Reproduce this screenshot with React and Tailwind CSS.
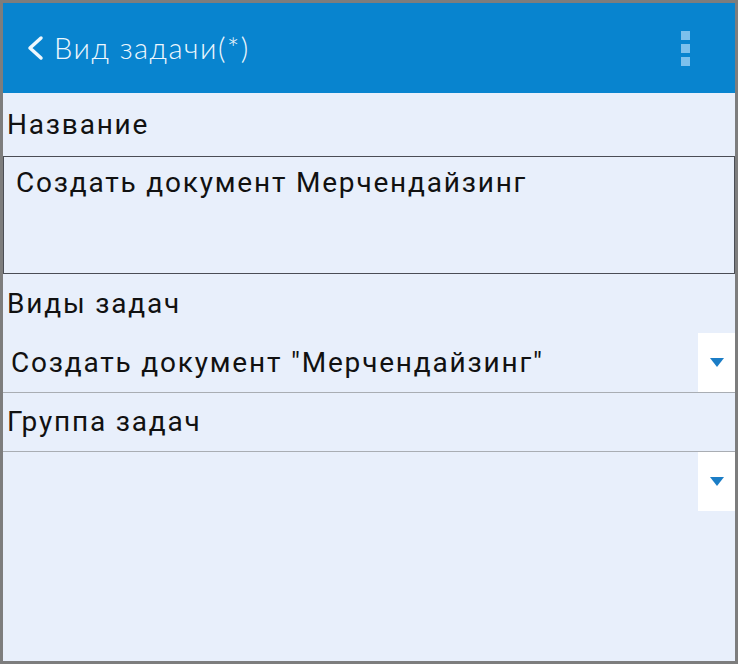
export default function App() {
  const font = { fontFamily: 'Roboto, "Noto Sans", sans-serif' };
  const Tri = () => (
    <svg width="14" height="10" viewBox="0 0 14 10">
      <path d="M0 0 L14 0 L7 9 Z" fill="#1b7dc6" />
    </svg>
  );
  return (
    <div className="w-[738px] h-[664px] bg-[#7d7d7d] pt-[3px] pl-[3px] pr-[3px] pb-[3px]" style={font}>
      <div className="w-full h-full bg-[#e8effb] flex flex-col">
        <div className="h-[90px] bg-[#0884cf] flex items-center justify-between pl-[22px] pr-[45px] shrink-0">
          <div className="flex items-center gap-[9px]">
            <svg width="20" height="28" viewBox="0 0 20 28">
              <path d="M16 4 L5 14 L16 24" fill="none" stroke="#eef7fd" strokeWidth="3.5" strokeLinecap="round" strokeLinejoin="round" />
            </svg>
            <span className="text-[29px] text-[#eef7fd] font-light tracking-[1.5px]" style={{ fontFamily: '"Lato", "Open Sans", sans-serif' }}>Вид задачи(*)</span>
          </div>
          <div className="flex flex-col gap-[4px]">
            <div className="w-[9px] h-[9px] bg-[#7dc0ec]" />
            <div className="w-[9px] h-[9px] bg-[#7dc0ec]" />
            <div className="w-[9px] h-[9px] bg-[#7dc0ec]" />
          </div>
        </div>
        <div className="h-[63px] flex items-center pl-[4px] text-[28px] tracking-[1.8px] text-[#111] shrink-0">Название</div>
        <div className="h-[118px] border border-[#4a4d55] pl-[12px] pt-[9px] text-[28px] tracking-[1.8px] text-[#111] shrink-0 leading-[34px]">Создать документ Мерчендайзинг</div>
        <div className="h-[59px] flex items-center pl-[4px] text-[28px] tracking-[1.8px] text-[#111] shrink-0">Виды задач</div>
        <div className="h-[60px] flex border-b border-[#a9adb3] shrink-0">
          <div className="flex-1 flex items-center pl-[8px] text-[28px] tracking-[1.8px] text-[#111]">Создать документ "Мерчендайзинг"</div>
          <div className="w-[37px] bg-white flex items-center justify-center">
            <Tri />
          </div>
        </div>
        <div className="h-[59px] flex items-center pl-[4px] text-[28px] tracking-[1.8px] text-[#111] border-b border-[#a9adb3] shrink-0">Группа задач</div>
        <div className="h-[59px] flex shrink-0">
          <div className="flex-1" />
          <div className="w-[37px] bg-white flex items-center justify-center">
            <Tri />
          </div>
        </div>
      </div>
    </div>
  );
}
